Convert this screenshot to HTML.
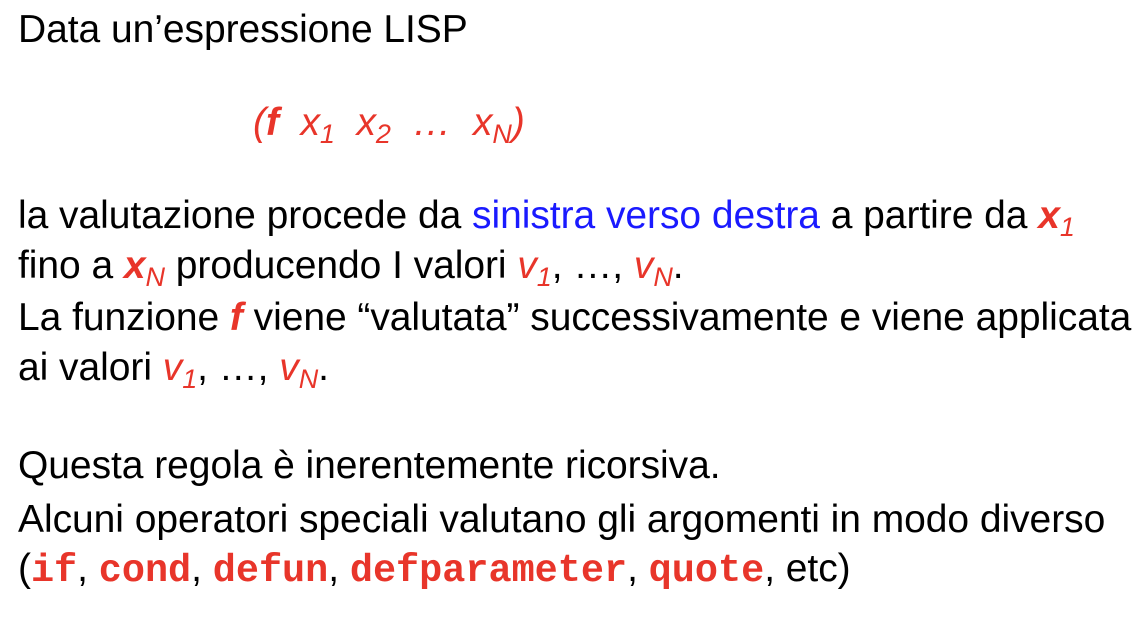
<!DOCTYPE html>
<html><head><meta charset="utf-8"><style>
body{margin:0;width:1146px;height:618px;background:#fff;overflow:hidden;font-family:"Liberation Sans",Arial,sans-serif;font-size:39px;color:#000}
.l{position:absolute;left:18px;line-height:44px;white-space:nowrap;letter-spacing:-0.05px}
.r{color:#e8352a;font-style:italic}
.b{color:#1a1aff}
.m{color:#e8352a;font-family:"Liberation Mono",monospace;font-weight:bold;font-size:38.5px;letter-spacing:0}
sub{font-size:27px;vertical-align:-8px;line-height:0}
</style></head><body>
<div class="l" style="top:8px">Data un’espressione LISP</div>
<div class="l r" style="top:101px;left:253px">(<b>f</b>&nbsp; x<sub>1</sub>&nbsp; x<sub>2</sub>&nbsp; …&nbsp; x<sub>N</sub>)</div>
<div class="l" style="top:194px">la valutazione procede da <span class="b">sinistra verso destra</span> a partire da <span class="r"><b>x</b><sub>1</sub></span></div>
<div class="l" style="top:244px">fino a <span class="r"><b>x</b><sub>N</sub></span> producendo I valori <span class="r">v<sub>1</sub></span>, …, <span class="r">v<sub>N</sub></span>.</div>
<div class="l" style="top:296px">La funzione <span class="r"><b>f</b></span> viene “valutata” successivamente e viene applicata</div>
<div class="l" style="top:346px">ai valori <span class="r">v<sub>1</sub></span>, …, <span class="r">v<sub>N</sub></span>.</div>
<div class="l" style="top:444px">Questa regola è inerentemente ricorsiva.</div>
<div class="l" style="top:498px">Alcuni operatori speciali valutano gli argomenti in modo diverso</div>
<div class="l" style="top:547px">(<span class="m">if</span>, <span class="m">cond</span>, <span class="m">defun</span>, <span class="m">defparameter</span>, <span class="m">quote</span>, etc)</div>
</body></html>
